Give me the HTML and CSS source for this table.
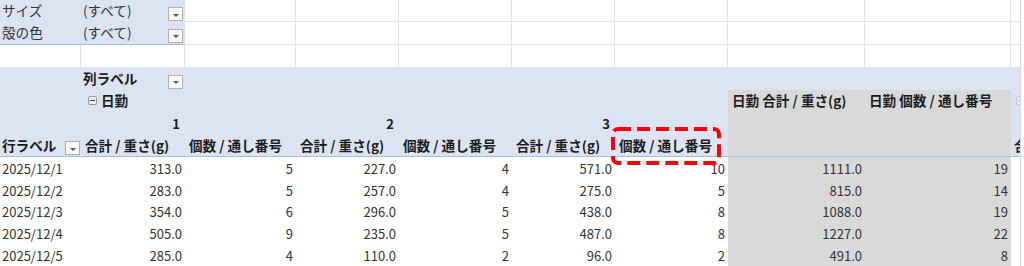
FILE: index.html
```html
<!DOCTYPE html>
<html lang="ja">
<head>
<meta charset="utf-8">
<link rel="stylesheet" href="styles.css">
</head>
<body>
<div class="sheet">
  <div class="row top">
    <div class="cell filt jp">サイズ</div>
    <div class="cell filt fb jp"><span>(すべて)</span><span class="dd"></span></div>
    <div class="cell g"></div><div class="cell g"></div><div class="cell g"></div><div class="cell g"></div><div class="cell g"></div><div class="cell g"></div><div class="cell g"></div><div class="cell gb"></div>
  </div>
  <div class="row top">
    <div class="cell filt fl jp">殻の色</div>
    <div class="cell filt fl fb jp"><span>(すべて)</span><span class="dd"></span></div>
    <div class="cell g"></div><div class="cell g"></div><div class="cell g"></div><div class="cell g"></div><div class="cell g"></div><div class="cell g"></div><div class="cell g"></div><div class="cell gb"></div>
  </div>
  <div class="row top">
    <div class="cell gr"></div><div class="cell gr"></div>
    <div class="cell gr"></div><div class="cell gr"></div><div class="cell gr"></div><div class="cell gr"></div><div class="cell gr"></div><div class="cell gr"></div><div class="cell gr"></div><div class="cell"></div>
  </div>

  <div class="row pv">
    <div class="cell"></div>
    <div class="cell fb b jp"><span>列ラベル</span><span class="dd"></span></div>
    <div class="cell"></div><div class="cell"></div><div class="cell"></div><div class="cell"></div><div class="cell"></div><div class="cell"></div><div class="cell"></div><div class="cell"></div>
  </div>
  <div class="row pv">
    <div class="cell"></div>
    <div class="cell b grp jp"><span class="tog"></span><span>日勤</span></div>
    <div class="cell"></div><div class="cell"></div><div class="cell"></div><div class="cell"></div><div class="cell"></div>
    <div class="cell gray b jp">日勤 合計 / 重さ(g)</div>
    <div class="cell gray b jp">日勤 個数 / 通し番号</div>
    <div class="cell jc"><span class="tog faint"></span></div>
  </div>
  <div class="row pv">
    <div class="cell"></div>
    <div class="cell b r rn">1</div>
    <div class="cell"></div>
    <div class="cell b r rn">2</div>
    <div class="cell"></div>
    <div class="cell b r rn">3</div>
    <div class="cell"></div>
    <div class="cell gray"></div><div class="cell gray"></div><div class="cell"></div>
  </div>
  <div class="row pv hdr">
    <div class="cell b rl jp"><span>行ラベル</span><span class="dd"></span></div>
    <div class="cell b jp">合計 / 重さ(g)</div>
    <div class="cell b jp">個数 / 通し番号</div>
    <div class="cell b jp">合計 / 重さ(g)</div>
    <div class="cell b jp">個数 / 通し番号</div>
    <div class="cell b jp">合計 / 重さ(g)</div>
    <div class="cell b jp">個数 / 通し番号</div>
    <div class="cell gray"></div><div class="cell gray"></div>
    <div class="cell b jt jp">合計 / 重さ(g)</div>
  </div>

  <div class="row data">
    <div class="cell lbl">2025/12/1</div>
    <div class="cell r">313.0</div><div class="cell r">5</div>
    <div class="cell r">227.0</div><div class="cell r">4</div>
    <div class="cell r">571.0</div><div class="cell r">10</div>
    <div class="cell r gray">1111.0</div><div class="cell r gray">19</div><div class="cell"></div>
  </div>
  <div class="row data">
    <div class="cell lbl">2025/12/2</div>
    <div class="cell r">283.0</div><div class="cell r">5</div>
    <div class="cell r">257.0</div><div class="cell r">4</div>
    <div class="cell r">275.0</div><div class="cell r">5</div>
    <div class="cell r gray">815.0</div><div class="cell r gray">14</div><div class="cell"></div>
  </div>
  <div class="row data">
    <div class="cell lbl">2025/12/3</div>
    <div class="cell r">354.0</div><div class="cell r">6</div>
    <div class="cell r">296.0</div><div class="cell r">5</div>
    <div class="cell r">438.0</div><div class="cell r">8</div>
    <div class="cell r gray">1088.0</div><div class="cell r gray">19</div><div class="cell"></div>
  </div>
  <div class="row data">
    <div class="cell lbl">2025/12/4</div>
    <div class="cell r">505.0</div><div class="cell r">9</div>
    <div class="cell r">235.0</div><div class="cell r">5</div>
    <div class="cell r">487.0</div><div class="cell r">8</div>
    <div class="cell r gray">1227.0</div><div class="cell r gray">22</div><div class="cell"></div>
  </div>
  <div class="row data">
    <div class="cell lbl">2025/12/5</div>
    <div class="cell r">285.0</div><div class="cell r">4</div>
    <div class="cell r">110.0</div><div class="cell r">2</div>
    <div class="cell r">96.0</div><div class="cell r">2</div>
    <div class="cell r gray">491.0</div><div class="cell r gray">8</div><div class="cell"></div>
  </div>

  <svg class="mark" width="110" height="38" viewBox="0 0 110 38" aria-hidden="true">
    <rect x="2" y="2" width="106" height="34" rx="5" ry="5" fill="none" stroke="#ff0000" stroke-width="4" stroke-dasharray="13 6"/>
  </svg>
</div>
</body>
</html>
```

FILE: styles.css
```css
* {
  box-sizing: border-box;
  margin: 0;
  padding: 0;
}

html, body {
  background: #ffffff;
}

body {
  width: 1024px;
  height: 266px;
  overflow: hidden;
  font-family: "Noto Sans CJK JP", "Noto Sans", sans-serif;
  font-size: 13px;
  color: #333333;
}

.sheet {
  position: relative;
  width: 1021px;
  border-right: 1px solid #d8d8d8;
}

.row {
  display: grid;
  grid-template-columns: 81px 104px 111px 103px 113px 103px 113px 137px 146px 9px;
}

.top {
  height: 22.33px;
}

.pv {
  height: 22.625px;
  background: #dce3f2;
}

.data {
  height: 21.7px;
}

.cell {
  display: flex;
  align-items: center;
  padding: 0 4px;
  white-space: nowrap;
  overflow: hidden;
  min-width: 0;
  line-height: 1;
}

.jp {
  font-size: 13.6px;
}

.lbl {
  padding-left: 2px;
}

.filt {
  background: #dce3f2;
  padding-left: 2px;
}

.fb {
  padding-left: 2px;
  padding-right: 2px;
}

.fl {
  border-bottom: 1px solid #a3bbe6;
}

.g {
  border-right: 1px solid #e3e3e3;
  border-bottom: 1px solid #e3e3e3;
}

.gb {
  border-bottom: 1px solid #e3e3e3;
}

.gr {
  border-right: 1px solid #e3e3e3;
}

.b {
  font-weight: 700;
  color: #1c1c1c;
}

.r {
  justify-content: flex-end;
  padding-right: 3px;
}

.rn {
  padding-right: 5px;
}

.gray {
  background: #d9d9d9;
}

.hdr {
  border-bottom: 1px solid #a6bde6;
}

.rl {
  padding-left: 2px;
  padding-right: 1px;
}

.dd {
  width: 15px;
  height: 14px;
  margin-left: auto;
  align-self: flex-end;
  margin-bottom: 1px;
  border: 1px solid #b0b0b0;
  background: #fafafa;
  display: flex;
  align-items: center;
  justify-content: center;
  flex: none;
}

.dd::after {
  content: "";
  border-left: 3px solid transparent;
  border-right: 3px solid transparent;
  border-top: 3px solid #555555;
  margin-top: 2px;
}

.grp {
  padding-left: 7px;
  gap: 4px;
}

.tog {
  width: 9px;
  height: 9px;
  border: 1px solid #9a9a9a;
  border-radius: 2px;
  background: #eeeeee;
  display: flex;
  align-items: center;
  justify-content: center;
  flex: none;
}

.tog::after {
  content: "";
  width: 5px;
  height: 1px;
  background: #444444;
}

.faint {
  border-color: #c4c9d4;
  background: #e4e8f2;
}

.faint::after {
  background: #b8bdc8;
}

.jc {
  padding-left: 5px;
  padding-right: 0;
}

.jt {
  padding-left: 3px;
  padding-right: 0;
  align-items: center;
}

.mark {
  position: absolute;
  left: 611px;
  top: 127px;
}
```
